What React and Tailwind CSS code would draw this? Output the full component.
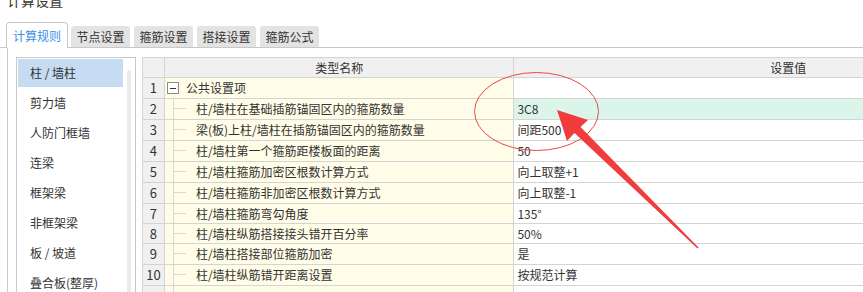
import React from "react";

const sideItems = ["柱 / 墙柱", "剪力墙", "人防门框墙", "连梁", "框架梁", "非框架梁", "板 / 坡道", "叠合板(整厚)"];

const rows = [
  { n: "1", name: "公共设置项", val: "", h: "h-[21px]", group: true },
  { n: "2", name: "柱/墙柱在基础插筋锚固区内的箍筋数量", val: "3C8", h: "h-[21px]", hl: true },
  { n: "3", name: "梁(板)上柱/墙柱在插筋锚固区内的箍筋数量", val: "间距500", h: "h-[21px]" },
  { n: "4", name: "柱/墙柱第一个箍筋距楼板面的距离", val: "50", h: "h-[21px]" },
  { n: "5", name: "柱/墙柱箍筋加密区根数计算方式", val: "向上取整+1", h: "h-[21px]" },
  { n: "6", name: "柱/墙柱箍筋非加密区根数计算方式", val: "向上取整-1", h: "h-[21px]" },
  { n: "7", name: "柱/墙柱箍筋弯勾角度", val: "135°", h: "h-[20px]" },
  { n: "8", name: "柱/墙柱纵筋搭接接头错开百分率", val: "50%", h: "h-[20px]" },
  { n: "9", name: "柱/墙柱搭接部位箍筋加密", val: "是", h: "h-[21px]" },
  { n: "10", name: "柱/墙柱纵筋错开距离设置", val: "按规范计算", h: "h-[21px]" },
  { n: "", name: "", val: "", h: "h-[21px]" },
];

export default function App() {
  return (
    <div className="relative w-[863px] h-[292px] overflow-hidden bg-white text-[#333] font-['Noto_Sans_CJK_SC',sans-serif]">
      <div className="-mt-[7px] h-[14px] pl-[7px] text-[14px] leading-[14px]">计算设置</div>

      <div className="mt-[15px] flex items-end h-[26px] pl-[6px] border-b border-[#c8c8c8] text-[12px] leading-none">
        <div className="h-[26px] -mb-px w-[62px] border border-b-0 border-[#c8c8c8] rounded-t-[4px] bg-white text-[#3a8ee6] flex items-center justify-center">计算规则</div>
        <div className="ml-[3px] h-[21px] w-[59px] bg-[#e3e3e3] rounded-t-[3px] flex items-center justify-center">节点设置</div>
        <div className="ml-[4px] h-[21px] w-[59px] bg-[#e3e3e3] rounded-t-[3px] flex items-center justify-center">箍筋设置</div>
        <div className="ml-[4px] h-[21px] w-[59px] bg-[#e3e3e3] rounded-t-[3px] flex items-center justify-center">搭接设置</div>
        <div className="ml-[4px] h-[21px] w-[59px] bg-[#e3e3e3] rounded-t-[3px] flex items-center justify-center">箍筋公式</div>
      </div>

      <div className="ml-[7px] h-[260px] border-l border-[#c8c8c8] pl-[8px] pt-[9px] flex items-start">
        <div className="w-[120px] h-[300px] shrink-0 border border-[#c8c8c8] p-px flex">
          <div className="w-[105px] flex flex-col gap-[2px] text-[12px]">
            {sideItems.map((s, i) => (
              <div key={i} className={"h-[28px] pl-[12px] flex items-center " + (i === 0 ? "bg-[#c5dcf2]" : "")}>
                {s}
              </div>
            ))}
          </div>
          <div className="ml-[4px] mt-[11px] w-[4px] h-[260px] rounded-t-[2px] bg-[#ebebeb]"></div>
        </div>

        <div className="ml-[6px] w-[920px] shrink-0 border-l border-t border-[#d4d4d4] text-[12px]">
          <div className="flex h-[20px] border-b border-[#d4d4d4] bg-[#f0f0f0]">
            <div className="w-[22px] border-r border-[#d4d4d4]"></div>
            <div className="w-[351px] border-r border-[#d4d4d4] flex items-center justify-center">类型名称</div>
            <div className="w-[550px] flex items-center justify-center">设置值</div>
          </div>
          {rows.map((r, i) => (
            <div key={i} className={"flex border-b border-[#d4d4d4] " + r.h}>
              <div className="w-[22px] border-r border-[#d4d4d4] bg-[#f0f0f0] flex items-center justify-center text-[13px]">{r.n}</div>
              <div className="w-[351px] border-r border-[#d4d4d4] bg-[#fffde8] flex items-stretch">
                {r.group ? (
                  <div className="flex items-center pl-[2px]">
                    <div className="w-[12px] h-[12px] border border-[#8a8a8a] bg-white flex items-center justify-center">
                      <div className="w-[6px] h-px bg-[#333]"></div>
                    </div>
                    <span className="ml-[7px]">{r.name}</span>
                  </div>
                ) : (
                  <div className="flex items-stretch">
                    <div className="ml-[8px] w-[13px] border-l border-[#d8d8d8] flex flex-col">
                      <div className="h-1/2 border-b border-[#d8d8d8]"></div>
                    </div>
                    <span className="ml-[10px] flex items-center">{r.name}</span>
                  </div>
                )}
              </div>
              <div className={"w-[550px] pl-[3px] flex items-center " + (r.hl ? "bg-[#dcf5ea]" : "bg-white")}>{r.val}</div>
            </div>
          ))}
        </div>
      </div>

      <svg className="absolute left-0 top-0 pointer-events-none" width="863" height="292" viewBox="0 0 863 292">
        <ellipse cx="536.5" cy="111.5" rx="62" ry="39" fill="none" stroke="#e84a4a" strokeWidth="1" />
        <polygon
          points="557,110 588,120 580.5,127 698.5,247.5 697.5,248.5 574.5,133 567,141"
          fill="#f03c3c"
        />
      </svg>
    </div>
  );
}
